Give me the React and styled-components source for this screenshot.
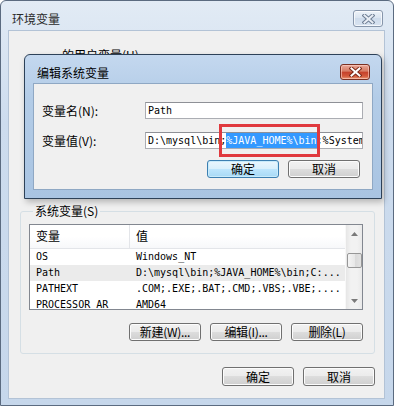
import React from "react";
import styled, { createGlobalStyle } from "styled-components";

const GlobalStyle = createGlobalStyle`
  html, body { margin: 0; padding: 0; background: #ffffff; }
  body {
    font-family: "Noto Sans CJK SC", "Noto Sans", sans-serif;
    font-size: 12px;
    color: #000;
  }
  * { box-sizing: border-box; }
`;

const Window = styled.div`
  position: relative;
  width: 394px;
  height: 406px;
  border: 1px solid #5b6b80;
  border-radius: 6px 6px 0 0;
  background: linear-gradient(#e2ebf5, #cddcee 30%, #c6d7eb);
  padding: 0 8px 6px 7px;
  display: flex;
  flex-direction: column;
`;

const TitleBar = styled.div`
  height: 29px;
  display: flex;
  justify-content: space-between;
  align-items: flex-start;
`;

const Title = styled.div`
  padding: 11px 0 0 4px;
  line-height: 14px;
  color: ${(p) => (p.$active ? "#000" : "#2a2a2a")};
`;

const CloseButton = styled.div`
  width: 30px;
  height: ${(p) => (p.$active ? 16 : 17)}px;
  margin: ${(p) => (p.$active ? "9px 3px 0 0" : "9px 2px 0 0")};
  border-radius: 3px;
  display: flex;
  align-items: center;
  justify-content: center;
  border: 1px solid ${(p) => (p.$active ? "#7a3022" : "#8796ab")};
  background: ${(p) =>
    p.$active
      ? "linear-gradient(#e9a99a, #d67a62 45%, #c5402a 50%, #d35a3c 80%, #e89a77)"
      : "linear-gradient(#eef3f9, #dbe5f1 45%, #cfdcec 50%, #d8e3f0)"};
  box-shadow: inset 0 0 0 1px ${(p) => (p.$active ? "rgba(255,210,200,0.6)" : "rgba(255,255,255,0.7)")};
`;

const Content = styled.div`
  flex: 1;
  background: #f0f0f0;
  border: 1px solid #b3c3d6;
  padding: 17px 9px 12px 11px;
  display: flex;
  flex-direction: column;
`;

const UserLabel = styled.div`
  line-height: 14px;
  padding-left: 42px;
`;

const Spacer = styled.div`
  flex: 1;
`;

const Group = styled.fieldset`
  margin: 0;
  padding: 6px 11px 12px 8px;
  border: 1px solid #d5dfe5;
  border-radius: 3px;
  display: flex;
  flex-direction: column;
  min-width: 0;
`;

const Legend = styled.legend`
  padding: 0 2px;
  margin-left: 4px;
  line-height: 14px;
`;

const ListView = styled.div`
  height: 86px;
  border: 1px solid #828790;
  background: #fff;
  display: flex;
  overflow: hidden;
`;

const Table = styled.div`
  flex: 1;
  display: flex;
  flex-direction: column;
  min-width: 0;
`;

const HeaderRow = styled.div`
  height: 24px;
  flex: none;
  display: grid;
  grid-template-columns: 100px minmax(0, 1fr);
  background: linear-gradient(#ffffff, #ffffff 50%, #f7f8fa);
  border-bottom: 1px solid #e3e5e9;
`;

const HeaderCell = styled.div`
  padding: 4px 0 0 6px;
  line-height: 14px;
  border-right: ${(p) => (p.$divider ? "1px solid #e3e5e9" : "none")};
`;

const Row = styled.div`
  height: 16px;
  flex: none;
  display: grid;
  grid-template-columns: 100px minmax(0, 1fr);
  background: ${(p) => (p.$selected ? "#ebebeb" : "transparent")};
  font-family: "DejaVu Sans Mono", "Liberation Mono", monospace;
  font-size: 10px;
  line-height: 16px;
  white-space: pre;
`;

const Cell = styled.div`
  padding-left: 6px;
  overflow: hidden;
`;

const ScrollBar = styled.div`
  width: 17px;
  flex: none;
  display: flex;
  flex-direction: column;
  background: linear-gradient(90deg, #e6e6e6, #f2f2f2 30%, #f2f2f2 70%, #e9e9e9);
  border-left: 1px solid #f8f8f8;
`;

const ArrowBox = styled.div`
  height: 17px;
  display: flex;
  align-items: center;
  justify-content: center;
`;

const Track = styled.div`
  flex: 1;
`;

const Thumb = styled.div`
  margin: 11px 0 0 1px;
  width: 15px;
  height: 15px;
  border: 1px solid #979797;
  border-radius: 2px;
  background: linear-gradient(90deg, #f4f4f4, #e8e8e8 50%, #d9d9d9 51%, #e2e2e2);
`;

const ButtonRow = styled.div`
  display: flex;
  justify-content: flex-end;
  gap: 9px;
  margin-top: ${(p) => p.$top || 0}px;
  padding-right: ${(p) => p.$right || 0}px;
`;

const Button = styled.div`
  width: 72px;
  height: ${(p) => p.$h || 18}px;
  border: 1px solid ${(p) => (p.$default ? "#3c7fb1" : "#707070")};
  border-radius: 3px;
  display: flex;
  align-items: center;
  justify-content: center;
  line-height: 14px;
  white-space: nowrap;
  letter-spacing: ${(p) => (p.$tight ? "-0.3px" : "0")};
  background: ${(p) =>
    p.$default
      ? "linear-gradient(#eaf6fd, #d9f0fc 49%, #bee6fd 50%, #a7d9f5)"
      : "linear-gradient(#f2f2f2, #ebebeb 49%, #dddddd 50%, #cfcfcf)"};
  box-shadow: inset 0 0 0 1px ${(p) => (p.$default ? "#c8ebfb" : "#fcfcfc")};
`;

const Dialog = styled.div`
  position: absolute;
  left: 23px;
  top: 53px;
  width: 358px;
  height: 145px;
  border: 1px solid #2d4158;
  border-radius: 6px 6px 0 0;
  background: linear-gradient(#c4d8ef, #b3cce7 30%, #a9c4e2);
  padding: 0 8px 8px 8px;
  display: flex;
  flex-direction: column;
  box-shadow: 2px 3px 6px rgba(0, 0, 0, 0.25);
`;

const DialogTitleBar = styled(TitleBar)`
  height: 28px;
`;

const DialogBody = styled.div`
  flex: 1;
  background: #f0f0f0;
  border: 1px solid #8fa8c4;
  padding: 18px 9px 10px 8px;
  display: grid;
  grid-template-columns: 103px minmax(0, 1fr);
  grid-auto-rows: 17px;
  row-gap: 13px;
`;

const FieldLabel = styled.div`
  line-height: 17px;
`;

const FieldBox = styled.div`
  position: relative;
  min-width: 0;
`;

const TextBox = styled.div`
  height: 17px;
  border: 1px solid #abadb3;
  border-top-color: #8e9096;
  background: #fff;
  padding-left: 2px;
  font-family: "DejaVu Sans Mono", "Liberation Mono", monospace;
  font-size: 10px;
  line-height: 15px;
  white-space: pre;
  overflow: hidden;
`;

const Selected = styled.span`
  display: inline-block;
  height: 15px;
  line-height: 15px;
  vertical-align: top;
  background: #3399ff;
  color: #fff;
`;

const Mark = styled.div`
  position: absolute;
  left: 74px;
  top: -8px;
  width: 101px;
  height: 33px;
  border: 3px solid #e0393e;
`;

const DialogButtons = styled(ButtonRow)`
  grid-column: 1 / 3;
  margin-top: -2px;
`;

function CloseGlyph({ fill, edge }) {
  const d = "M2.5 1.5 L10.5 8.5 M10.5 1.5 L2.5 8.5";
  return (
    <svg width="13" height="10" viewBox="0 0 13 10">
      <path d={d} stroke={edge} strokeWidth="4" strokeLinecap="square" fill="none" />
      <path d={d} stroke={fill} strokeWidth="2" strokeLinecap="square" fill="none" />
    </svg>
  );
}

function Arrow({ up }) {
  return (
    <svg width="7" height="4" viewBox="0 0 7 4">
      <path d={up ? "M0 4 L3.5 0 L7 4 Z" : "M0 0 L3.5 4 L7 0 Z"} fill="#7a7a7a" />
    </svg>
  );
}

const rows = [
  ["OS", "Windows_NT"],
  ["Path", "D:\\mysql\\bin;%JAVA_HOME%\\bin;C:..."],
  ["PATHEXT", ".COM;.EXE;.BAT;.CMD;.VBS;.VBE;...."],
  ["PROCESSOR_AR", "AMD64"],
];

export default function App() {
  return (
    <>
      <GlobalStyle />
      <Window>
        <TitleBar>
          <Title>环境变量</Title>
          <CloseButton>
            <CloseGlyph fill="#e9eef5" edge="#6f7f95" />
          </CloseButton>
        </TitleBar>
        <Content>
          <UserLabel>的用户变量(U)</UserLabel>
          <Spacer />
          <Group>
            <Legend>系统变量(S)</Legend>
            <ListView>
              <Table>
                <HeaderRow>
                  <HeaderCell $divider>变量</HeaderCell>
                  <HeaderCell>值</HeaderCell>
                </HeaderRow>
                {rows.map(([name, value]) => (
                  <Row key={name} $selected={name === "Path"}>
                    <Cell>{name}</Cell>
                    <Cell>{value}</Cell>
                  </Row>
                ))}
              </Table>
              <ScrollBar>
                <ArrowBox>
                  <Arrow up />
                </ArrowBox>
                <Track>
                  <Thumb />
                </Track>
                <ArrowBox>
                  <Arrow />
                </ArrowBox>
              </ScrollBar>
            </ListView>
            <ButtonRow $top={13}>
              <Button $tight>新建(W)...</Button>
              <Button $tight>编辑(I)...</Button>
              <Button $tight>删除(L)</Button>
            </ButtonRow>
          </Group>
          <ButtonRow $top={13}>
            <Button $h={19}>确定</Button>
            <Button $h={19}>取消</Button>
          </ButtonRow>
        </Content>

        <Dialog>
          <DialogTitleBar>
            <Title $active>编辑系统变量</Title>
            <CloseButton $active>
              <CloseGlyph fill="#ffffff" edge="#7d2a1a" />
            </CloseButton>
          </DialogTitleBar>
          <DialogBody>
            <FieldLabel>变量名(N):</FieldLabel>
            <FieldBox>
              <TextBox>Path</TextBox>
            </FieldBox>
            <FieldLabel>变量值(V):</FieldLabel>
            <FieldBox>
              <TextBox>
                D:\mysql\bin;<Selected>%JAVA_HOME%\bin</Selected>;%SystemRoot%\system32;
              </TextBox>
              <Mark />
            </FieldBox>
            <DialogButtons $right={3}>
              <Button $default>确定</Button>
              <Button>取消</Button>
            </DialogButtons>
          </DialogBody>
        </Dialog>
      </Window>
    </>
  );
}
